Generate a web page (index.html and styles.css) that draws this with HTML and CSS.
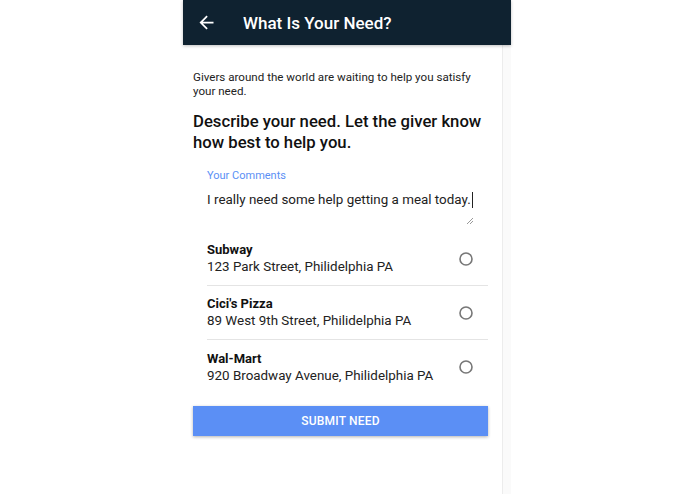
FILE: index.html
```html
<html lang="en">
<head>
    <meta charset="UTF-8">
    <meta name="viewport" content="width=device-width, initial-scale=1.0">
    <title>What Is Your Need?</title>
    <link rel="stylesheet" href="styles.css">
</head>
<body>

    <div class="phone">
        <div class="appbar">
            <svg class="back" width="21" height="21" viewBox="0 0 24 24">
                <path fill="#fff" d="M20 11H7.83l5.59-5.59L12 4l-8 8 8 8 1.41-1.41L7.83 13H20v-2z"/>
            </svg>
            <h1>What Is Your Need?</h1>
        </div>

        <div class="screen">
            <div class="content">
                <p class="intro">Givers around the world are waiting to help you satisfy your need.</p>
                <h2>Describe your need. Let the giver know how best to help you.</h2>

                <div class="form">
                    <div class="field">
                        <label>Your Comments</label>
                        <div class="textarea">
                            <span>I really need some help getting a meal today.</span><span class="caret"></span>
                            <svg class="grip" width="8" height="8" viewBox="0 0 8 8">
                                <path d="M7 1L1 7M7 4L4 7" stroke="#999" stroke-width="1"/>
                            </svg>
                        </div>
                    </div>

                    <ul class="places">
                        <li class="place">
                            <div>
                                <strong>Subway</strong>
                                <span>123 Park Street, Philidelphia PA</span>
                            </div>
                            <svg class="radio" width="16" height="16" viewBox="0 0 16 16"><circle cx="8" cy="8" r="6" fill="none" stroke="#777" stroke-width="1.6"/></svg>
                        </li>
                        <li class="place">
                            <div>
                                <strong>Cici's Pizza</strong>
                                <span>89 West 9th Street, Philidelphia PA</span>
                            </div>
                            <svg class="radio" width="16" height="16" viewBox="0 0 16 16"><circle cx="8" cy="8" r="6" fill="none" stroke="#777" stroke-width="1.6"/></svg>
                        </li>
                        <li class="place">
                            <div>
                                <strong>Wal-Mart</strong>
                                <span>920 Broadway Avenue, Philidelphia PA</span>
                            </div>
                            <svg class="radio" width="16" height="16" viewBox="0 0 16 16"><circle cx="8" cy="8" r="6" fill="none" stroke="#777" stroke-width="1.6"/></svg>
                        </li>
                    </ul>
                </div>

                <button class="submit">Submit Need</button>
            </div>
            <div class="track"></div>
        </div>
    </div>

</body>
</html>
```

FILE: styles.css
```css
body {
    margin: 0;
    background: #fff;
    font-family: Roboto, "Liberation Sans", sans-serif;
    color: #212121;
}
.phone {
    width: 328px;
    height: 494px;
    margin-left: 183px;
    display: flex;
    flex-direction: column;
}
.appbar {
    height: 45px;
    background-color: #0f2230;
    display: flex;
    align-items: center;
    box-shadow: 0 1px 3px rgba(0,0,0,0.25);
    position: relative;
    z-index: 1;
}
.back {
    margin-left: 13px;
}
.appbar h1 {
    margin: 0 0 0 26px;
    color: #fff;
    font-size: 17px;
    font-weight: 500;
}
.screen {
    flex: 1;
    display: flex;
}
.content {
    flex: 1;
    padding: 25px 14px 0 10px;
}
.track {
    width: 8px;
    background: #fafafa;
    border-left: 1px solid #ececec;
}
.intro {
    margin: 0;
    font-size: 11.6px;
    line-height: 14px;
    color: #222;
}
h2 {
    margin: 13px 0 0;
    font-size: 16.7px;
    font-weight: 500;
    line-height: 21px;
    color: #111;
}
.form {
    padding-left: 14px;
    margin-top: 16px;
}
.field label {
    display: block;
    font-size: 11px;
    color: #5b8ff5;
    line-height: 14px;
}
.textarea {
    position: relative;
    height: 40px;
    padding-top: 9px;
    font-size: 13.4px;
    line-height: 16px;
    color: #222;
}
.caret {
    display: inline-block;
    width: 1px;
    height: 16px;
    margin-left: 1px;
    background: #222;
    vertical-align: top;
}
.grip {
    position: absolute;
    right: 14px;
    bottom: 7px;
}
.places {
    list-style: none;
    margin: 0;
    padding: 0;
}
.place {
    display: flex;
    align-items: center;
    justify-content: space-between;
    height: 54px;
    border-bottom: 1px solid #e4e4e4;
    padding-right: 14px;
    box-sizing: border-box;
}
.place:last-child {
    border-bottom: none;
}
.place strong {
    display: block;
    font-size: 13px;
    font-weight: bold;
    line-height: 16px;
    color: #111;
}
.place span {
    display: block;
    font-size: 13.4px;
    line-height: 17px;
    color: #222;
}
.submit {
    display: block;
    width: 100%;
    height: 30px;
    margin-top: 12px;
    border: none;
    background-color: #5b8ff5;
    color: #fff;
    font-family: Roboto, "Liberation Sans", sans-serif;
    font-size: 12px;
    font-weight: 500;
    text-transform: uppercase;
    letter-spacing: 0.2px;
    box-shadow: 0 1px 3px rgba(0,0,0,0.3);
}
```
